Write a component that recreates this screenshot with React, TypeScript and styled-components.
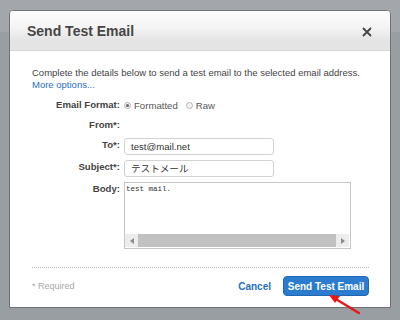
import React from 'react';
import styled, { createGlobalStyle } from 'styled-components';

const GlobalStyle = createGlobalStyle`
  html, body {
    margin: 0;
    padding: 0;
    width: 400px;
    height: 320px;
    overflow: hidden;
  }
  body {
    font-family: "Liberation Sans", Arial, sans-serif;
    background: linear-gradient(#a3a7ab 0 32px, #999ea3 32px 100%);
  }
`;

const Page = styled.div`
  position: relative;
  width: 400px;
  height: 320px;
  box-sizing: border-box;
  padding: 10px 0 0 9px;
`;

const Dialog = styled.div`
  width: 382px;
  height: 298px;
  box-sizing: border-box;
  background: #fff;
  border: 1px solid #6f7378;
  border-radius: 4px 4px 0 0;
  display: flex;
  flex-direction: column;
  overflow: hidden;
`;

const Header = styled.div`
  height: 40px;
  flex: none;
  display: flex;
  align-items: center;
  justify-content: space-between;
  padding: 0 17px 0 17px;
  background: linear-gradient(#fdfdfd 0%, #f3f3f3 45%, #e4e4e4 75%, #e4e4e4 100%);
  border-bottom: 1px solid #d4d4d4;
  box-sizing: border-box;
`;

const Title = styled.h1`
  margin: 0;
  font-size: 14px;
  font-weight: 700;
  color: #464646;
`;

const CloseButton = styled.button`
  border: none;
  background: none;
  padding: 0;
  width: 12px;
  height: 12px;
  display: flex;
  align-items: center;
  justify-content: center;
  margin-top: 3px;
`;

const Content = styled.div`
  padding: 16px 21px 0 22px;
  display: flex;
  flex-direction: column;
  flex: 1;
`;

const Intro = styled.p`
  margin: 0;
  font-size: 9.5px;
  line-height: 12px;
  color: #444;
`;

const MoreLink = styled.a`
  color: #1f6fc0;
  text-decoration: none;
`;

const Form = styled.div`
  display: grid;
  grid-template-columns: 88px 1fr;
  column-gap: 4px;
  margin-top: 4px;
`;

const Label = styled.div<{ $height?: number }>`
  font-size: 9.6px;
  font-weight: 700;
  color: #444;
  text-align: right;
  height: ${p => p.$height ?? 20}px;
  line-height: 20px;
`;

const Field = styled.div<{ $height?: number }>`
  height: ${p => p.$height ?? 20}px;
  display: flex;
  align-items: center;
  gap: 8px;
`;

const RadioOption = styled.label`
  display: flex;
  align-items: center;
  gap: 3px;
  font-size: 9.6px;
  color: #555;
`;

const Radio = styled.span<{ $checked?: boolean }>`
  width: 7px;
  height: 7px;
  border-radius: 50%;
  border: 1px solid #b5b5b5;
  background: #f2f2f2;
  box-sizing: border-box;
  display: flex;
  align-items: center;
  justify-content: center;

  &::after {
    content: '';
    width: 3px;
    height: 3px;
    border-radius: 50%;
    background: ${p => (p.$checked ? '#666' : 'transparent')};
  }
`;

const TextInput = styled.div`
  width: 150px;
  height: 17px;
  box-sizing: border-box;
  border: 1px solid #d2d2d2;
  border-radius: 3px;
  padding: 0 6px;
  font-size: 9.6px;
  line-height: 15px;
  color: #333;
  font-family: "Liberation Sans", "Noto Sans CJK JP", sans-serif;
`;

const TextArea = styled.div`
  width: 227px;
  height: 67px;
  box-sizing: border-box;
  border: 1px solid #c6c6c6;
  display: flex;
  flex-direction: column;
  margin-top: 3px;
`;

const AreaText = styled.div`
  flex: 1;
  font-family: "Liberation Mono", "DejaVu Sans Mono", monospace;
  font-size: 7.5px;
  padding: 2px 1px;
  color: #333;
`;

const Scrollbar = styled.div`
  height: 13px;
  display: flex;
  margin: 0 1px 1px 0;
`;

const ScrollButton = styled.div`
  width: 13px;
  background: #ececec;
  display: flex;
  align-items: center;
  justify-content: center;
`;

const ScrollTrack = styled.div`
  flex: 1;
  background: #c1c1c1;
`;

const Divider = styled.hr`
  border: none;
  border-top: 1px dotted #b9b9b9;
  margin: 18px 0 0;
`;

const Footer = styled.div`
  display: flex;
  align-items: center;
  margin-top: 8px;
  height: 20px;
`;

const Required = styled.span`
  font-size: 9px;
  color: #a7a7a7;
  flex: 1;
`;

const CancelLink = styled.a`
  font-size: 10px;
  font-weight: 700;
  color: #1f6fc0;
  margin-right: 12px;
  margin-top: 1px;
`;

const PrimaryButton = styled.button`
  width: 86px;
  height: 20px;
  border: 1px solid #1f66b4;
  border-radius: 4px;
  background: #2b7ccf;
  color: #fff;
  font-family: "Liberation Sans", Arial, sans-serif;
  font-size: 10px;
  font-weight: 700;
  padding: 0;
`;

const Arrow = styled.svg`
  position: absolute;
  left: 326px;
  top: 292px;
`;

export default function App() {
  return (
    <Page>
      <GlobalStyle />
      <Dialog>
        <Header>
          <Title>Send Test Email</Title>
          <CloseButton>
            <svg width="10" height="10" viewBox="0 0 10 10">
              <path d="M1 1 L9 9 M9 1 L1 9" stroke="#444" strokeWidth="1.8" />
            </svg>
          </CloseButton>
        </Header>
        <Content>
          <Intro>
            Complete the details below to send a test email to the selected email address.
            <br />
            <MoreLink>More options...</MoreLink>
          </Intro>
          <Form>
            <Label>Email Format:</Label>
            <Field>
              <RadioOption>
                <Radio $checked />
                Formatted
              </RadioOption>
              <RadioOption>
                <Radio />
                Raw
              </RadioOption>
            </Field>
            <Label>From*:</Label>
            <Field />
            <Label $height={22}>To*:</Label>
            <Field $height={22}>
              <TextInput>test@mail.net</TextInput>
            </Field>
            <Label $height={22}>Subject*:</Label>
            <Field $height={22}>
              <TextInput>テストメール</TextInput>
            </Field>
            <Label>Body:</Label>
            <Field $height={70}>
              <TextArea>
                <AreaText>test mail.</AreaText>
                <Scrollbar>
                  <ScrollButton>
                    <svg width="4" height="6" viewBox="0 0 4 6">
                      <path d="M4 0 L0 3 L4 6 Z" fill="#8a8a8a" />
                    </svg>
                  </ScrollButton>
                  <ScrollTrack />
                  <ScrollButton>
                    <svg width="4" height="6" viewBox="0 0 4 6">
                      <path d="M0 0 L4 3 L0 6 Z" fill="#8a8a8a" />
                    </svg>
                  </ScrollButton>
                </Scrollbar>
              </TextArea>
            </Field>
          </Form>
          <Divider />
          <Footer>
            <Required>* Required</Required>
            <CancelLink>Cancel</CancelLink>
            <PrimaryButton>Send Test Email</PrimaryButton>
          </Footer>
        </Content>
      </Dialog>
      <Arrow width="36" height="24" viewBox="0 0 36 24">
        <path d="M33 21 L8 6" stroke="#e8161a" strokeWidth="2.4" strokeLinecap="round" />
        <path d="M3 3 L14 4 L9 11 Z" fill="#e8161a" />
      </Arrow>
    </Page>
  );
}
